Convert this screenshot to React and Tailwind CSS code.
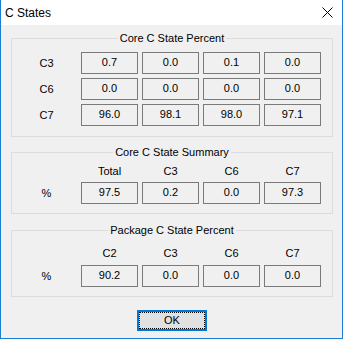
import React from 'react';

const core = [
  ['C3', ['0.7', '0.0', '0.1', '0.0']],
  ['C6', ['0.0', '0.0', '0.0', '0.0']],
  ['C7', ['96.0', '98.1', '98.0', '97.1']],
];

function Box({ value }) {
  return (
    <div className="w-[57px] h-[22px] border border-[#7a7a7a] bg-[#f0f0f0] text-center leading-[19px]">
      {value}
    </div>
  );
}

function Row({ label, values }) {
  return (
    <div className="flex items-center">
      <div className="w-[69px] text-center leading-[22px]">{label}</div>
      <div className="flex gap-[4px]">
        {values.map((v, i) => (
          <Box key={i} value={v} />
        ))}
      </div>
    </div>
  );
}

function Headers({ items }) {
  return (
    <div className="flex">
      <div className="w-[69px]" />
      <div className="flex gap-[4px]">
        {items.map((h) => (
          <div key={h} className="w-[57px] text-center leading-[13px]">
            {h}
          </div>
        ))}
      </div>
    </div>
  );
}

function Group({ title, className, children }) {
  return (
    <fieldset className={`border border-[#dcdcdc] ${className}`}>
      <legend className="mx-auto px-[2px] leading-[13px]">{title}</legend>
      {children}
    </fieldset>
  );
}

export default function App() {
  return (
    <div
      className="w-[343px] h-[339px] flex flex-col bg-[#f0f0f0] border-x border-b border-[#1a7fd4] text-[11px] text-black"
      style={{ fontFamily: '"Liberation Sans", Arial, sans-serif' }}
    >
      {/* title bar */}
      <div className="h-[25px] shrink-0 bg-white flex items-center justify-between pl-[4px] pr-[9px]">
        <span className="text-[12px] leading-[14px]">C States</span>
        <svg width="11" height="11" viewBox="0 0 11 11">
          <path d="M0.5 0.5 L10.5 10.5 M10.5 0.5 L0.5 10.5" stroke="#000" strokeWidth="1" fill="none" />
        </svg>
      </div>

      <div className="flex-1 flex flex-col pl-[10px] pr-[9px] pt-[7px]">
        <Group title="Core C State Percent" className="pt-[7px] pb-[10px]">
          <div className="flex flex-col gap-[4px]">
            {core.map(([l, v]) => (
              <Row key={l} label={l} values={v} />
            ))}
          </div>
        </Group>

        <Group title="Core C State Summary" className="mt-[9px] pt-[6px] pb-[9px]">
          <Headers items={['Total', 'C3', 'C6', 'C7']} />
          <div className="mt-[4px]">
            <Row label="%" values={['97.5', '0.2', '0.0', '97.3']} />
          </div>
        </Group>

        <Group title="Package C State Percent" className="mt-[10px] pt-[10px] pb-[9px]">
          <Headers items={['C2', 'C3', 'C6', 'C7']} />
          <div className="mt-[5px]">
            <Row label="%" values={['90.2', '0.0', '0.0', '0.0']} />
          </div>
        </Group>

        <button className="mt-[13px] self-center w-[70px] h-[21px] border-2 border-[#0078d7] bg-[#e1e1e1] p-0">
          <div className="w-full h-full border border-dotted border-black flex items-center justify-center leading-[13px]">
            OK
          </div>
        </button>
      </div>
    </div>
  );
}
